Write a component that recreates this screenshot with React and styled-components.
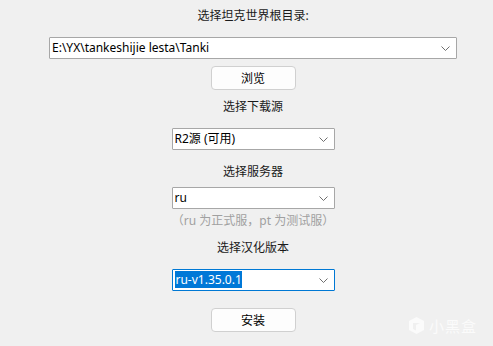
import React from "react";
import styled, { createGlobalStyle } from "styled-components";

const GlobalStyle = createGlobalStyle`
  html, body {
    margin: 0;
    padding: 0;
    background: #f0f0f0;
  }
  body {
    font-family: "Noto Sans", "Noto Sans CJK SC", sans-serif;
    font-size: 12px;
    color: #000;
  }
`;

const Window = styled.div`
  position: relative;
  width: 493px;
  height: 346px;
  background: #f0f0f0;
  display: flex;
  flex-direction: column;
  align-items: center;
  padding: 8px 0 0 13px;
  box-sizing: border-box;
  overflow: hidden;
`;

const Label = styled.div`
  height: 16px;
  line-height: 16px;
  font-size: 12px;
  margin-top: ${(props) => props.top || 0}px;
  color: ${(props) => (props.hint ? "#a0a0a0" : "#1a1a1a")};
  white-space: nowrap;
`;

const Combo = styled.div`
  display: flex;
  align-items: center;
  box-sizing: border-box;
  width: ${(props) => props.width}px;
  height: 22px;
  margin-top: ${(props) => props.top || 0}px;
  background: #fff;
  border: 1px solid ${(props) => (props.focused ? "#0078d4" : "#a7a7a7")};
  border-radius: 1px;
  padding: 0 6px 0 2px;
`;

const ComboText = styled.span`
  flex: 1;
  font-size: 12px;
  line-height: 14px;
  white-space: nowrap;
`;

const Selected = styled.span`
  background: #0078d7;
  color: #fff;
  padding: 0 0 0 1px;
`;

const Button = styled.div`
  box-sizing: border-box;
  width: 85px;
  height: 24px;
  margin-top: ${(props) => props.top || 0}px;
  display: flex;
  align-items: center;
  justify-content: center;
  background: #fdfdfd;
  border: 1px solid #d0d0d0;
  border-radius: 4px;
  font-size: 12px;
`;

const Watermark = styled.div`
  position: absolute;
  right: 16px;
  bottom: 10px;
  display: flex;
  align-items: center;
  gap: 4px;
  color: #fbfbfb;
  font-size: 15px;
  letter-spacing: 1px;
  font-family: "Noto Sans CJK SC", sans-serif;
`;

const Chevron = () => (
  <svg width="9" height="5" viewBox="0 0 9 5">
    <path d="M0.5 0.5 L4.5 4.5 L8.5 0.5" fill="none" stroke="#5f5f5f" strokeWidth="0.9" />
  </svg>
);

const ComboBox = ({ width, top, focused, children }) => (
  <Combo width={width} top={top} focused={focused}>
    <ComboText>{children}</ComboText>
    <Chevron />
  </Combo>
);

export default function App() {
  return (
    <>
      <GlobalStyle />
      <Window>
        <Label>选择坦克世界根目录:</Label>
        <ComboBox width={408} top={13}>E:\YX\tankeshijie lesta\Tanki</ComboBox>
        <Button top={7}>浏览</Button>
        <Label top={9}>选择下载源</Label>
        <ComboBox width={163} top={13}>R2源 (可用)</ComboBox>
        <Label top={14}>选择服务器</Label>
        <ComboBox width={163} top={7}>ru</ComboBox>
        <Label top={4} hint>（ru 为正式服，pt 为测试服）</Label>
        <Label top={11}>选择汉化版本</Label>
        <ComboBox width={163} top={13} focused>
          <Selected>ru-v1.35.0.1</Selected>
        </ComboBox>
        <Button top={17}>安装</Button>
        <Watermark>
          <svg width="17" height="19" viewBox="0 0 17 19">
            <path d="M1 5 L8.5 1 L16 5 L16 14 L8.5 18 L1 14 Z M5 7 L5 13 L8 14.5 L8 9 L12 7 Z" fill="#fbfbfb" fillRule="evenodd" />
          </svg>
          小黑盒
        </Watermark>
      </Window>
    </>
  );
}
